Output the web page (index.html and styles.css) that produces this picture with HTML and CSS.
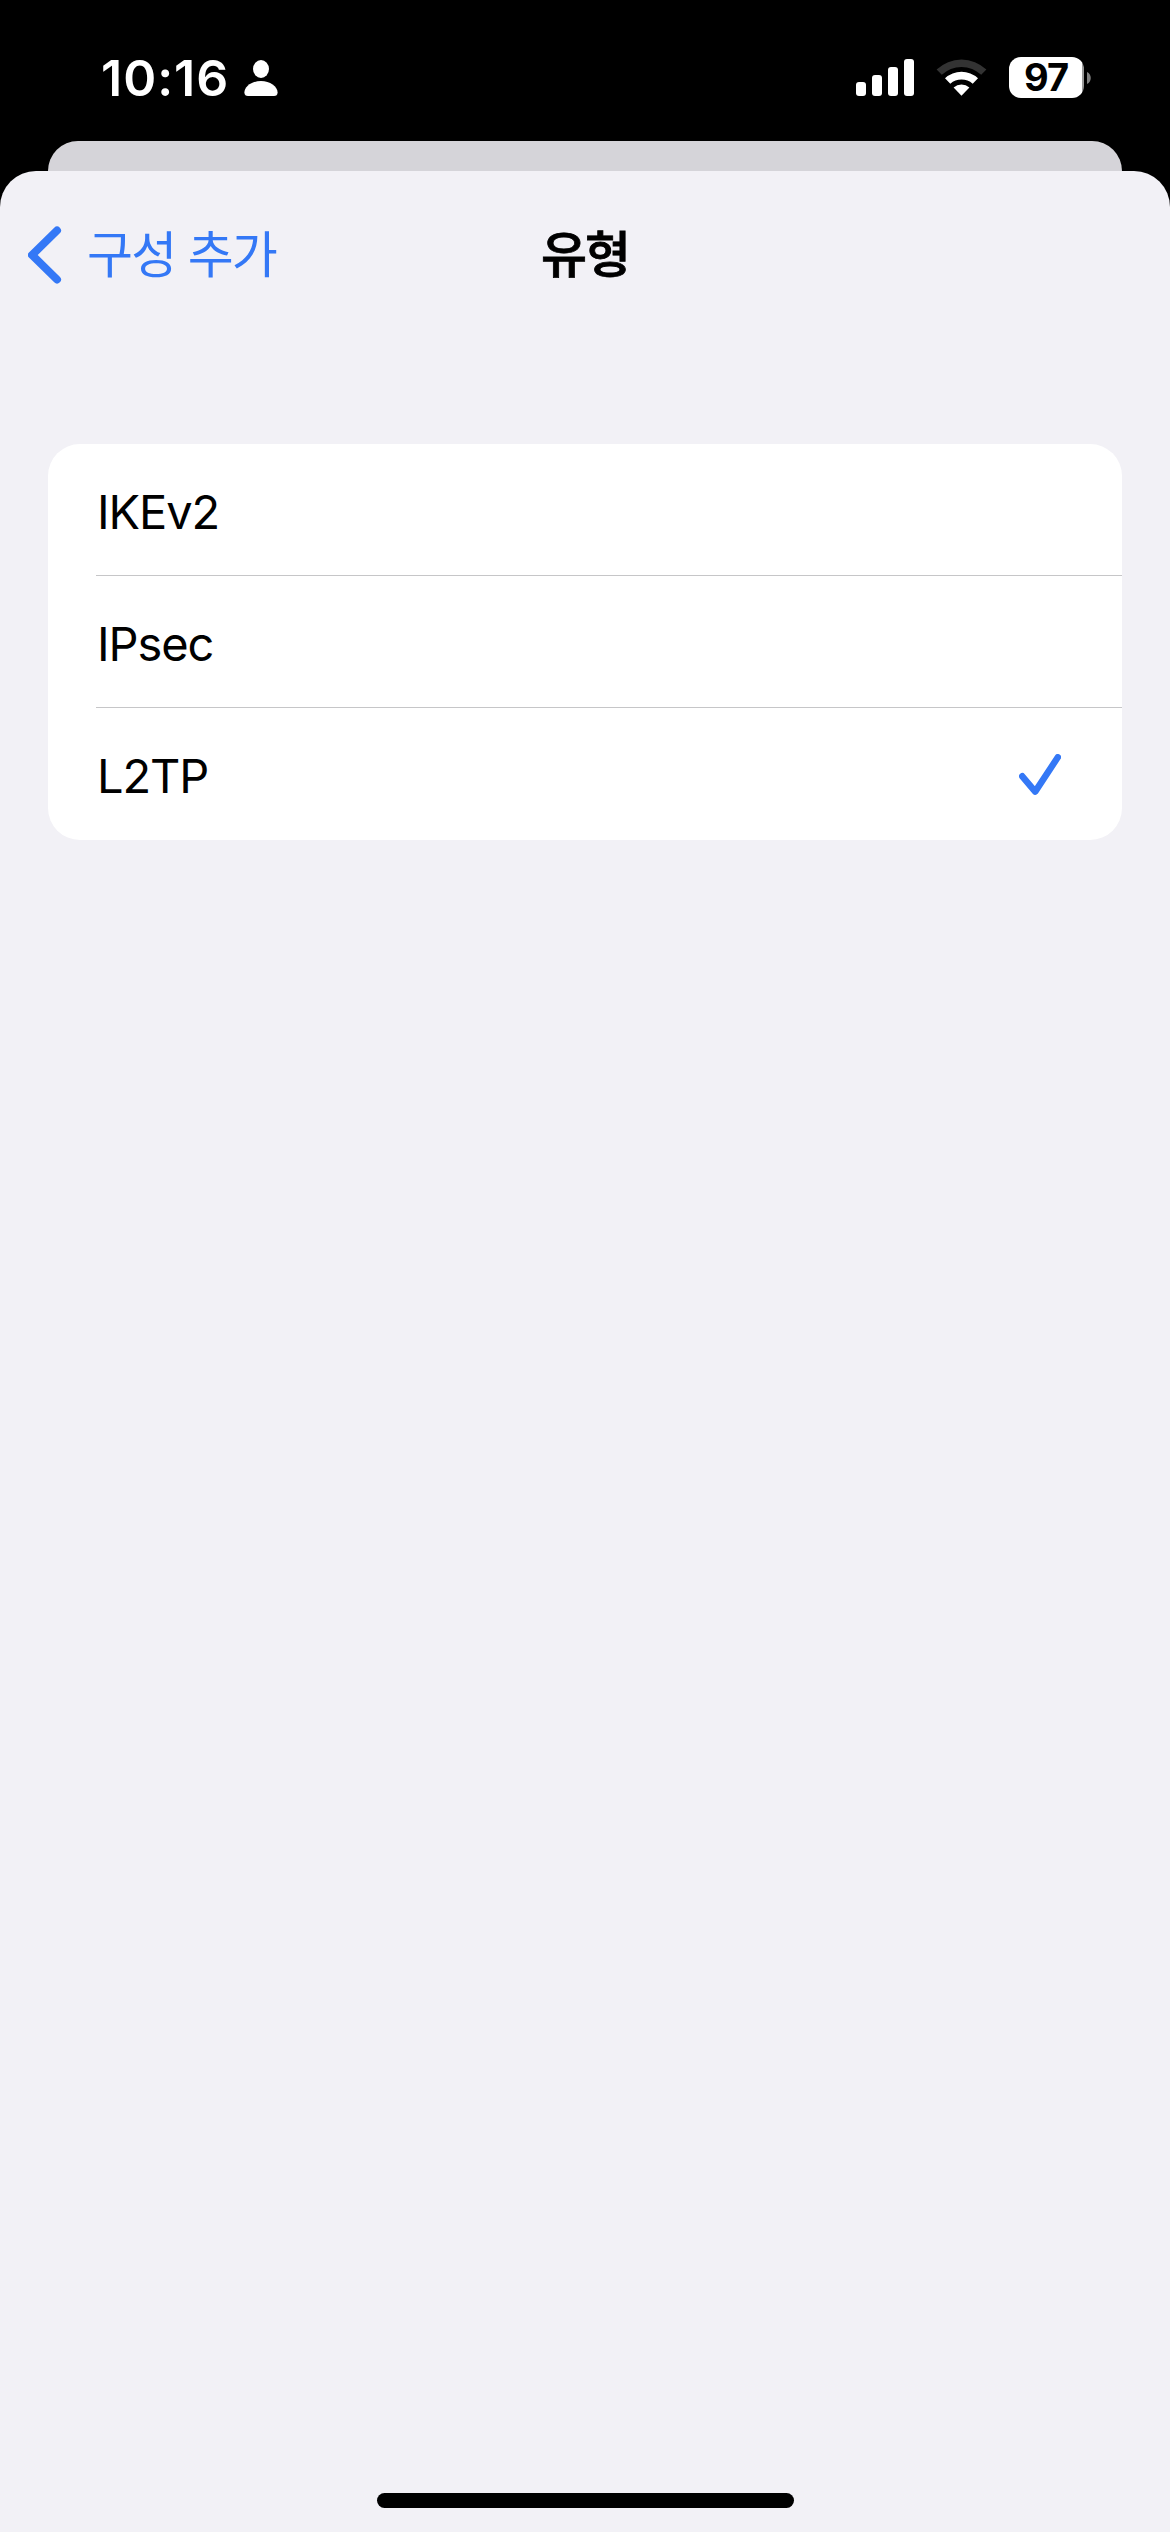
FILE: index.html
```html
<!DOCTYPE html>
<html lang="ko">
<head>
    <meta charset="UTF-8">
    <title>유형</title>
    <link rel="stylesheet" href="styles.css">
</head>
<body>
<div class="status">
    <div class="status-left">
        <span class="time">10:16</span>
        <svg class="person" width="34" height="36" viewBox="0 0 34 36">
            <ellipse cx="17" cy="9" rx="8" ry="9"/>
            <path d="M17 21C8 21 .4 26.500 .4 32.500C.4 35 1.800 36 4 36H30C32.200 36 33.600 35 33.600 32.500C33.600 26.500 26 21 17 21Z"/>
        </svg>
    </div>
    <div class="status-right">
        <svg class="signal" width="58" height="38" viewBox="0 0 58 38">
            <rect x="0" y="23" width="10" height="14" rx="3"/>
            <rect x="16" y="16" width="10" height="21" rx="3"/>
            <rect x="32" y="8" width="10" height="29" rx="3"/>
            <rect x="48" y="0" width="10" height="37" rx="3"/>
        </svg>
        <svg class="wifi" width="52" height="38" viewBox="0 0 52 38">
            <path class="off" d="M.6 10.600A36 36 0 0 1 50.400 10.600L45.200 15.800A28.500 28.500 0 0 0 5.800 15.800Z"/>
            <path d="M9 19.200A24.500 24.500 0 0 1 42 19.200L36.700 24.700A17 17 0 0 0 14.300 24.700Z"/>
            <path d="M17.600 28.400A12 12 0 0 1 33.400 28.400L25.500 36.800Z"/>
        </svg>
        <div class="battery"><span>97</span></div>
        <svg class="nub" width="4" height="12" viewBox="0 0 4 12">
            <path d="M0 0C5 2 5 10 0 12Z"/>
        </svg>
    </div>
</div>
<div class="sheet-back"></div>
<div class="sheet">
    <div class="nav">
        <a class="back">
            <svg width="34" height="58" viewBox="0 0 34 58">
                <path d="M29 4.500L4 29L29 53.500"/>
            </svg>
            <span>구성 추가</span>
        </a>
        <h1>유형</h1>
    </div>
    <ul class="list">
        <li><span>IKEv2</span></li>
        <li><span>IPsec</span></li>
        <li>
            <span>L2TP</span>
            <svg class="check" width="42" height="42" viewBox="0 0 42 42">
                <path d="M3.300 22.300L16.200 37.600L38.800 3.300"/>
            </svg>
        </li>
    </ul>
    <div class="home"></div>
</div>
</body>
</html>
```

FILE: styles.css
```css
*{
    margin: 0;
    padding: 0;
    box-sizing: border-box;
}
body{
    width: 1170px;
    height: 2532px;
    background: #000;
    font-family: Inter, "Noto Sans CJK KR", sans-serif;
    display: flex;
    flex-direction: column;
    overflow: hidden;
}
svg{
    display: block;
    flex: none;
}
.status{
    height: 141px;
    padding: 48px 79px 0 101px;
    display: flex;
    justify-content: space-between;
    align-items: flex-start;
    color: #fff;
    fill: #fff;
}
.status-left,
.status-right{
    display: flex;
}
.time{
    width: 143px;
    font-size: 50px;
    line-height: 60px;
    font-weight: 600;
    letter-spacing: 1px;
    white-space: nowrap;
}
.person{
    margin-top: 12px;
}
.signal{
    margin-top: 11px;
}
.wifi{
    margin: 11px 21px 0 22px;
}
.wifi .off{
    fill: #333;
}
.battery{
    width: 75px;
    height: 41px;
    margin-top: 9px;
    border-radius: 12px;
    background: linear-gradient(to right, #fff 73px, #999 73px);
    color: #000;
    font-size: 38px;
    line-height: 41px;
    font-weight: 700;
    letter-spacing: -1px;
    text-indent: -1px;
    text-align: center;
}
.nub{
    margin: 24px 0 0 3px;
    fill: #808080;
}

.sheet-back{
    height: 30px;
    margin: 0 48px;
    border-radius: 30px 30px 0 0;
    background: #d5d4d9;
}
.sheet{
    flex: 1;
    display: flex;
    flex-direction: column;
    border-radius: 36px 36px 0 0;
    background: #f2f1f6;
}
.nav{
    height: 168px;
    padding-left: 28px;
    display: grid;
    grid-template-columns: 513px 1fr;
    align-items: center;
}
.back{
    display: flex;
    align-items: center;
    color: #3478f6;
    font-size: 50px;
    line-height: 60px;
}
.back path,
.check path{
    fill: none;
    stroke: #3478f6;
    stroke-width: 8;
    stroke-linecap: round;
    stroke-linejoin: round;
}
.back span{
    margin-left: 25px;
    letter-spacing: -1.8px;
}
.nav h1{
    font-size: 50px;
    line-height: 60px;
    font-weight: 500;
    letter-spacing: -2px;
    -webkit-text-stroke: 0.8px #000;
}

.list{
    margin: 105px 48px 0;
    border-radius: 32px;
    background: #fff;
    list-style: none;
}
.list li{
    height: 132px;
    margin-left: 48px;
    padding: 3px 61px 0 1px;
    display: flex;
    justify-content: space-between;
    align-items: center;
    border-bottom: 1px solid #c6c6c8;
    font-size: 47px;
    letter-spacing: -1.1px;
}
.list li:last-child{
    border-bottom: none;
}
.check{
    margin-bottom: 2px;
}
.check path{
    stroke-width: 6.5;
}
.home{
    width: 417px;
    height: 15px;
    margin: auto auto 24px;
    border-radius: 8px;
    background: #000;
}
```
